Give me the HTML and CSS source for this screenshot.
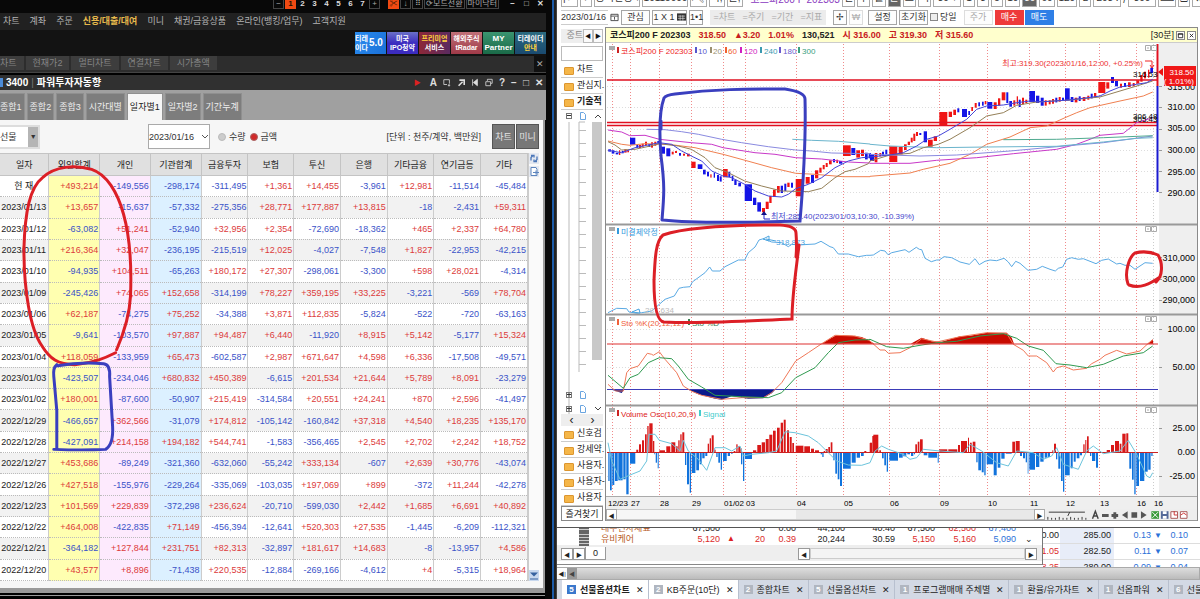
FILE: index.html
```html
<!DOCTYPE html>
<html lang="ko">
<head>
<meta charset="utf-8">
<title>3400 파워투자자동향</title>
<link rel="stylesheet" href="styles.css">
</head>
<body>
<div class="desk">
  <section class="trader">
    <div class="topbar">
      <span class="pager"><b>−</b><b class="on">1</b><b>2</b><b>3</b><b>4</b><b>5</b><b>6</b><b>7</b><b class="boxed">+</b></span>
      <span class="tools"><b class="on">✂</b><b class="boxed">↓</b><b class="boxed">⠿</b><b class="boxed">⟳모드전환</b><b class="boxed">마이닥터</b></span>
      <span class="wins"><b>−</b><b>□</b><b>✕</b></span>
    </div>
    <nav class="menu">
      <a href="#">차트</a><a href="#">계좌</a><a href="#">주문</a><a href="#" class="hot">신용/대출/대여</a><a href="#">미니</a><a href="#">채권/금융상품</a><a href="#">온라인(뱅킹/업무)</a><a href="#">고객지원</a>
    </nav>
    <div class="promos">
      <a href="#" class="p1"><span>티레<br>이다</span><strong>5.0</strong></a>
      <a href="#" class="p2">미국<br>IPO청약</a>
      <a href="#" class="p3"><em>프리미엄</em><br>서비스</a>
      <a href="#" class="p4">해외주식<br>tRadar</a>
      <a href="#" class="p5">MY<br>Partner</a>
      <a href="#" class="p6">티레이더<br><em>안내</em></a>
    </div>
    <div class="quick">
      <a href="#">차트</a><a href="#">현재가2</a><a href="#">멀티차트</a><a href="#">연결차트</a><a href="#">시가총액</a>
      <button class="qx">✕</button>
    </div>
    <header class="wtitle">
      <i class="mark"></i><strong>3400</strong><span class="bar">|</span><strong>파워투자자동향</strong>
      <span class="wicons"><b class="play">▶</b><b>A</b>
        <svg viewBox="0 0 10 10"><path d="M1 1.5h7v5M1 1.500v6h4M6 8.500h3M7.500 7v3"/></svg>
        <svg viewBox="0 0 10 10"><path d="M2 9l5-5M3 2h6v6" stroke-width="2"/></svg>
        <svg viewBox="0 0 10 10"><path d="M2 1v8M8 1v8L3 5z" fill="#ddd"/></svg>
        <svg viewBox="0 0 10 10"><path d="M3 3V1h6v5H7M1 4h6v5H1z"/></svg>
        <b>?</b><b>−</b><b>□</b><b>✕</b></span>
    </header>
    <div class="tabs">
      <button>종합1</button><button>종합2</button><button>종합3</button><button>시간대별</button><button class="sel">일자별1</button><button>일자별2</button><button>기간누계</button>
    </div>
    <div class="sheet">
      <div class="filter">
        <label class="kind"><select aria-label="상품"><option>선물</option></select><i>▼</i></label>
        <label class="date"><select aria-label="일자"><option>2023/01/16</option></select><svg viewBox="0 0 8 8"><path d="M1 2l3 3 3-3" fill="none" stroke="#555"/></svg></label>
        <label><input type="radio" name="unit">수량</label>
        <label><input type="radio" name="unit" checked>금액</label>
        <span class="unit">[단위 : 천주/계약, 백만원]</span>
        <button>차트</button><button>미니</button>
      </div>
      <div class="gridwrap">
        <table class="flow">
          <colgroup><col style="width:49px"><col style="width:51px"><col style="width:51px"><col style="width:51px"><col style="width:47px"><col style="width:46px"><col style="width:47px"><col style="width:47px"><col style="width:47px"><col style="width:47px"><col style="width:47px"></colgroup>
          <thead><tr><th>일자</th><th>외인합계</th><th>개인</th><th>기관합계</th><th>금융투자</th><th>보험</th><th>투신</th><th>은행</th><th>기타금융</th><th>연기금등</th><th>기타</th></tr></thead>
          <tbody id="rows"></tbody>
        </table>
        <div class="side">
          <svg viewBox="0 0 10 10"><path d="M2 7V4l2-2M2 2h3v2M8 3v3L6 8M8 8H5V6" fill="none" stroke="#4a76b8" stroke-width="1.300"/></svg>
          <svg viewBox="0 0 10 10"><path d="M2 1h5l1 2v6H2zM4 6h6M7 4v4" fill="#fff" stroke="#5c84bd"/></svg>
          <svg class="end" viewBox="0 0 10 10"><path d="M1 2h8L5 6zM1 8h8v1H1z" fill="#36629f"/></svg>
        </div>
      </div>
    </div>
    <div class="sill"></div>
    <svg class="marker" viewBox="0 0 556 599" preserveAspectRatio="xMinYMin meet">
      <path class="mr" d="M117 351C124 335 130 318 131 297C132 270 131 240 124 215C118 193 107 175 92 170C75 165 55 167 43 178C30 188 25 212 24 250C24 290 30 330 42 347C50 360 58 366 75 366C95 364 106 359 116 354"/>
      <path class="mb" d="M57 366Q53 369 54 378L57 412V451M58 367Q80 363 104 365Q111 366 110 378L113 428Q114 446 106 451Q84 452 54 451"/>
    </svg>
  </section>

  <section class="charts">
    <div class="cut tb1"><button>|←</button><button>♥</button><button class="w5">동적편성 ▾</button><button class="w5">10115000 ▾</button><button>🔍︎</button><button>미,</button><button>물,</button><span class="vio">코스피200 F 202303</span><button class="push">일</button><button>주</button><button>월</button><button class="dk">분</button><button>초</button><button>틱</button><button class="w3">30 ▾</button><button>1</button><button>3</button><button>5</button><button>10</button><button class="dk">30</button><button>60</button><button>120</button><button>L</button><button class="w3">203 ⁚</button><span>/</span><button class="w3">300</button><button>⌨</button><button>⎙</button><button>✿</button></div>
    <div class="tb2">
      <input class="dt" value="2023/01/16" aria-label="조회일"><svg viewBox="0 0 10 10"><path d="M1 2h8v7H1zM1 4h8M5 5v3" fill="none" stroke="#444"/></svg>
      <button class="w2">관심</button><button class="w4">1 X 1 <svg viewBox="0 0 10 10"><path d="M0 1h10v8H0z" fill="#333"/><path d="M1 4h8M1 6.500h8M3.500 3v6M6.500 3v6" stroke="#fff" stroke-width=".6"/></svg></button><button class="one">1•1</button>
      <span class="off"><button disabled>=차트</button><button disabled>=주기</button><button disabled>=기간</button><button disabled>=지표</button></span>
      <button class="one">✢</button><button class="one dim">₩</button>
      <button class="w2">설정</button><button class="w2">초기화</button><label class="today"><input type="checkbox">당일</label>
      <button class="w2 dim">주가</button><button class="w2 buy">매수</button><button class="w2 sell">매도</button>
    </div>
    <div class="mid">
      <aside class="tree">
        <div class="nub"><span>중트</span><button>◀</button><button>▶</button></div>
        <input class="find" aria-label="검색">
        <a href="#" class="fold">차트</a><a href="#" class="fold">관심지.</a><a href="#" class="fold open">기술적</a>
        <div class="branch">
          <svg viewBox="0 0 42 306" id="twigs"><path d="M18 12V262M18 12h6M8 12V306" stroke="#bbb" fill="none"/></svg>
          <i class="bar"></i>
        </div>
        <div class="lr"><span>‹</span><span>›</span></div>
        <a href="#" class="fold">신호검</a><a href="#" class="fold">강세약.</a><a href="#" class="fold">사용자.</a><a href="#" class="fold">사용자-</a><a href="#" class="fold">사용자</a>
        <button class="fav">즐겨찾기</button>
      </aside>
      <div class="frame">
        <div class="quote"><b>코스피200 F 202303</b><b class="r">318.50</b><b class="r">▲3.20</b><b class="r">1.01%</b><b>130,521</b><b class="r">시 316.00</b><b class="r">고 319.30</b><b class="r">저 315.60</b><span>[30분]</span><button aria-label="창 크기"><svg viewBox="0 0 8 8"><path d="M1.500 2h5v4.500h-5zM1 2.500h6" fill="none" stroke="#222"/></svg></button><button aria-label="닫기"><svg viewBox="0 0 8 8"><path d="M2 2l4 4M6 2L2 6" stroke="#222"/></svg></button></div>
        <svg class="plot" viewBox="606 42 591 466" id="plot">
          <rect x="606" y="42" width="591" height="466" fill="#fff"/>
          <rect x="1159" y="42" width="38" height="466" fill="#efefef"/><rect x="606" y="496" width="591" height="12" fill="#efefef"/>
          <g id="grid"></g>
          <g id="bars"></g>
          <path d="M607 79H1158M607 121.500H1158M607 124.500H1158" stroke="#e01020" stroke-width="1.500"/>
          <path d="M607 388.500H1158" stroke="#3b3bb8"/><path d="M607 451.500H1158" stroke="#c22"/>
          <g id="lines"></g>
          <path d="M607 343H1158" stroke="#dd3030" stroke-width="1.200"/>
          <path d="M1157.500 43V85" stroke="#e01020" stroke-width="2"/><path d="M1157.500 85V191" stroke="#1a1ad0" stroke-width="2"/>
          <path d="M606 223.500H1197M606 313.500H1197M606 404.500H1197" stroke="#999" stroke-width="2"/><path d="M606 495.500H1197" stroke="#aaa"/>
          <g id="heads"></g>
          <g class="t">
            <text x="621" y="53" fill="#e22">코스피200 F 202303</text>
            <text x="698" y="53" fill="#55c">10</text><text x="713" y="53" fill="#998f70">20</text><text x="728" y="53" fill="#f06030">60</text><text x="744" y="53" fill="#d020c0">120</text><text x="764" y="53" fill="#3a9ab0">240</text><text x="783" y="53" fill="#6a5acd">180</text><text x="802" y="53" fill="#3aa080">300</text>
            <text class="end" x="1143" y="65" fill="#e33">최고:319.30(2023/01/16,12:00, +0.25%)</text>
            <text x="771" y="218" fill="#44c">최저:285.40(2023/01/03,10:30, -10.39%)</text>
            <text x="1133" y="76">316.53</text><text x="1133" y="118">306.48</text><text x="1133" y="121">305.43</text>
            <text x="621" y="234" fill="#39d">미결제약정</text><text x="776" y="244" fill="#4aa3df">318,873</text><text x="645" y="312" fill="#bbb">287,634</text>
            <text x="621" y="325" fill="#f0603a">Sto %K(20,12,12)</text><text x="692" y="325" fill="#3a8050">Sto %D</text>
            <text x="621" y="416" fill="#d22">Volume Osc(10,20,9)</text><text x="703" y="416" fill="#4cc">Signal</text>
          </g>
          <path d="M1145 60h7v6M1150 64l2 3 2-3" stroke="#e22" fill="none"/><path d="M770 218h-6v-6" stroke="#22c" fill="none"/><path d="M761 214l3-4 3 4z" fill="#118"/>
          <path d="M763 238l6-3v5zM766 238l10 2M632 311l7-3 1 4z" stroke="#4aa3df" fill="#fff"/>
          <path d="M1158 71l5-4v8z" fill="#e11"/>
          <g class="t big end" id="ticks"></g>
          <rect x="1164" y="65" width="32" height="20" fill="#f01818"/>
          <g class="t end" fill="#fff"><text x="1194" y="74">318.50</text><text x="1194" y="83">( 1.01%)</text></g>
          <g class="t" id="days"></g>
          <path class="mb" d="M662 219C664 195 665 185 661 155C659 130 660 108 664 97Q666 94 675 93C715 88 745 88 785 88Q805 91 805 98C806 135 803 185 800 220Q700 223 663 219M661 120v8"/>
          <path class="mr" d="M799 244C796 270 792 295 792 318C745 320 705 323 664 321Q654 320 654 280C655 255 656 240 663 234C690 225 745 224 780 224Q796 225 796 232Q797 245 796 256"/>
          <path class="mr" d="M1128 283C1124 272 1129 256 1135 252Q1147 249 1158 254C1163 262 1163 275 1156 281M1160 276C1150 283 1140 288 1129 284"/>
        </svg>
        <div class="scroll"><button>◀</button><i></i><button>▶</button>
          <svg viewBox="0 0 160 12"><path d="M4 3h38M3 11V8M7 11V9M11 11V9M15 11V8M19 11V9M23 11V9M27 11V8M31 11V9M35 11V9M39 11V8M43 11V9M26 3l-2 4" stroke="#333" fill="none"/><path d="M50 10l3-8 3 8M51 7h4" stroke="#444" fill="none" stroke-width="1.500"/><path d="M60 5h7v3h-7zM70 5h7v3h-7zM72 3h3v7h-3zM87 2v8l-6-4zM91 3h6v6h-6zM101 2v8l6-4z" fill="#555"/><path d="M112 2h8v8h-8z" fill="#3a9a3a"/><path d="M113 3l6 6M119 3l-6 6" stroke="#fff"/><path d="M122 2h8v8h-8z" fill="#556a99"/><path d="M124 2h4v3h-4zM124 7h4v3h-4z" fill="#fff"/><path d="M132.500 2.500h7v7h-7zM142.500 2.500h7v7h-7z" fill="#fff" stroke="#a55"/><path d="M136 2v4h3M143 6l3-2 3 2" stroke="#c33" fill="none"/></svg></div>
      </div>
    </div>
    <div class="under">
      <div class="stocks">
        <div class="srow cutrow"><i class="qr"></i><a href="#">대우전자재료</a><span>67,500</span><u></u><span>0</span><span>0.00</span><span>44,100</span><span>40.40</span><span>67,500</span><span class="r">62,500</span><span class="b">67,400</span></div>
        <div class="srow"><i class="qr"></i><a href="#">유비케어</a><span class="r">5,120</span><u>▲</u><span class="r">20</span><span class="r">0.39</span><span>20,244</span><span>30.59</span><span class="r">5,150</span><span class="r">5,160</span><span class="b">5,090</span><em>⌄</em></div>
        <div class="sbar"><button>◀</button><button>▶</button><span class="zero">0</span><i class="gap"></i><button>◀</button><i class="track"></i><button>▶</button></div>
      </div>
      <div class="opts">
        <div><span>0.00</span><span class="st">285.00</span><span class="b">0.13</span><u>▼</u><span class="b">0.10</span></div>
        <div><span class="r">1.05</span><span class="st">282.50</span><span class="b">0.11</span><u>▼</u><span class="b">0.07</span></div>
        <div><span class="r">8.25</span><span class="st">280.00</span><span class="b">0.09</span><u>▼</u><span class="b">0.04</span></div>
      </div>
    </div>
    <div class="hbar"><button>◀|</button><button class="g">◀</button><i></i></div>
    <nav class="pages">
      <a href="#" class="cur"><i>5</i>선물옵션차트<b>✕</b></a><a href="#" class="wt"><i>2</i>KB주문(10단)<b>✕</b></a><a href="#"><i>2</i>종합차트<b>✕</b></a><a href="#"><i>5</i>선물옵션차트<b>✕</b></a><a href="#"><i>1</i>프로그램매매 주체별<b>✕</b></a><a href="#"><i>1</i>환율/유가차트<b>✕</b></a><a href="#"><i>1</i>선옵파워<b>✕</b></a><a href="#"><i>6</i>선물옵션</a>
    </nav>
  </section>
</div>
<script src="app.js"></script>
</body>
</html>
```

FILE: styles.css
```css
*{box-sizing:border-box}
body{margin:0;background:#fff;font-family:"Liberation Sans","Noto Sans CJK KR",sans-serif;font-size:9px;line-height:12px;color:#222;overflow:hidden}
a{color:inherit;text-decoration:none}
button,input,select{font:inherit;color:inherit;padding:0;margin:0;border:0;background:none;border-radius:0;appearance:none}
button{white-space:nowrap}
b{font-weight:400}
.desk{display:grid;grid-template-columns:minmax(0,556fr) minmax(0,644fr);min-height:100vh}

.trader{position:relative;background:#080808;padding-right:8px;border-right:2px solid #222;display:flex;flex-direction:column;min-width:0;white-space:nowrap}
.trader::after{content:"";position:absolute;right:0;top:0;bottom:0;width:2px;background:#1c5ba8}
.topbar{height:13px;display:flex;justify-content:flex-end;gap:8px;color:#ddd;overflow:hidden;line-height:8px;font-size:8px}
.topbar span{display:flex;gap:1px;height:9px}
.topbar b{width:11px;text-align:center;font-weight:700}
.topbar .boxed,.pager b:first-child{border:1px solid #444;border-top:0;width:auto;min-width:11px;padding:0 1px;color:#aaa;font-weight:400}
.topbar .on{background:#f04a12;color:#201000}
.topbar .wins{gap:3px}
.menu{height:17px;background:#212121;color:#b5b5b5;display:flex;gap:10px;padding:2px 3px}
.menu .hot{color:#e6b84c;font-weight:700}
.promos{height:26px;background:#131313;display:flex;justify-content:flex-end;gap:1px;padding:2px 0}
.promos a{width:31px;height:22px;color:#fff;font-size:8px;line-height:9px;font-weight:700;text-align:center;padding-top:2px}
.promos em{font-style:normal;color:#ffd23c}
.promos .p1{background:linear-gradient(120deg,#2a8cf0,#1a70d8);display:flex;font-size:7px;gap:1px}
.promos .p1 strong{font-size:10px;line-height:18px}
.promos .p2{background:linear-gradient(#6a70c8,#3c2cc0 50%);font-size:7px}
.promos .p3{background:linear-gradient(90deg,#8d2838,#5a2a60);font-size:7px}
.promos .p4{background:linear-gradient(#c07078,#a03a48);font-size:7px}
.promos .p5{background:linear-gradient(#3a9470,#1a6a48);font-size:8px}
.promos .p6{background:linear-gradient(#2a6a80,#1a4a70);font-size:7px}
.quick{height:17px;background:#2d2d2d;border-bottom:1px solid #444;display:flex;gap:2px;color:#858585}
.quick a{background:#3d3d3d;padding:1px 7px;height:14px}
.quick a:first-child{padding:1px 7px 1px 0}
.quick .qx{margin-left:auto;width:12px;background:#111;color:#aaa}
.wtitle{height:17px;background:#303030;border-top:2px solid #000;color:#fff;display:flex;align-items:center;gap:3px;font-size:10px}
.wtitle .mark{width:3px;height:9px;background:#4b8bd8}
.wtitle .bar{color:#777}
.wicons{margin-left:auto;display:flex;align-items:center;gap:6px;padding-right:3px;color:#ddd}
.wicons b{font-weight:700}
.wicons .play{color:#d22;font-size:7px;margin-right:3px}
.wicons svg{width:8px;height:9px;fill:none;stroke:#ddd}
.tabs{height:30px;background:#a0a0a0;display:flex;gap:2px;padding-top:3px}
.tabs button{background:#7d7d7d;border:1px solid #8f8f8f;border-bottom:0;color:#eee;padding:0 2px}
.tabs button:first-child{padding-left:0;border-left:0}
.tabs .sel{background:#f6f6f6;color:#222}
.sheet{background:#f6f6f6;border-right:2px solid #999;padding-right:3px;margin-right:1px;display:flex;flex-direction:column;padding-bottom:7px}
.filter{height:33px;display:flex;align-items:center;gap:4px;color:#333}
.filter label{display:flex;align-items:center;gap:3px}
.filter .kind{border:2px solid #ddd;border-left:0;background:#fff;height:24px;width:40px;justify-content:space-between;margin-right:104px}
.kind select{width:26px}
.kind i{background:#b5b5b5;font-style:normal;height:20px;line-height:20px;width:10px;font-size:7px;text-align:center}
.filter .date{border:1px solid #aaa;background:#fff;width:62px;height:25px;justify-content:space-between;gap:0;margin-right:4px}
.date svg{width:8px;height:8px}
.filter input{width:8px;height:8px;border-radius:50%;background:#ccc;border:1px solid #bbb}
.filter input:checked{background:#d02a2a;border-color:#a66}
.unit{margin-left:auto;margin-right:7px}
.filter button{background:#777;border:1px solid #555;color:#e5e5e5;width:23px;height:25px;margin-right:-3px}
.filter button:last-child{margin-right:1px}
.gridwrap{display:flex}
.flow{flex:1;border-collapse:collapse;table-layout:fixed;height:428px;min-width:0;background:#fff}
.flow th{background:#e0e0e0;border:1px solid #c4c4c4;border-left:0;height:22px;font-weight:400;padding:0}
.flow td{text-align:right;padding:0 1px 0 0;border-right:1px solid #ccc;border-bottom:1px dotted #bbb;height:21px;line-height:12px}
.flow tr:nth-child(even) td{background:#f2f2f2}
.flow td:first-child{text-align:center;color:#222}
.flow tr td:nth-child(2){background:#ffffb0}
.flow tr td:nth-child(3){background:#fdeafd}
.flow tr td:nth-child(4){background:#dcf0ff}
.up{color:#dc3b3b}.down{color:#3a52c8}
.side{width:12px;display:flex;flex-direction:column;gap:2px;background:#fafafa;border-left:1px solid #ccc}
.side svg{width:10px;height:11px;background:#e4e8f0}
.side .end{margin-top:auto;background:#c8d8ee}
.sill{flex:1;border-top:5px solid #999;background:linear-gradient(#000 0 2px,#999 2px 3px,#000 3px);margin-right:1px}
.marker{position:absolute;left:0;top:0;width:100%;pointer-events:none}
.mr,.mb{fill:none;stroke:#dc1f26;stroke-width:3;stroke-linecap:round}
.mb{stroke:#3a3fbf}

.charts{min-width:0;display:flex;flex-direction:column;background:#fff;border-left:1px solid #444;white-space:nowrap}
.cut{height:7px;overflow:hidden;display:flex;align-items:flex-end;gap:2px;padding:0 4px;color:#333;font-size:10px}
.cut button{height:18px;line-height:16px;border:1px solid #aaa;min-width:12px;flex:none;padding:0 1px}
.cut .w5{width:46px}.cut .w3{width:28px}
.cut .vio{color:#8a3ac0;margin-left:6px}
.cut .push{margin-left:auto}
.cut .dk{background:#666;color:#fff}
.cut span{line-height:14px}
.tb2{height:20px;display:flex;align-items:center;gap:2px;padding:0 4px;color:#333}
.tb2 svg{width:9px;height:10px;flex:none}
.tb2 button{height:15px;border:1px solid #a5a5a5;background:#fdfdfd}
.tb2 .dt{width:47px;height:15px;flex:none;border:1px solid #ccc;border-width:1px 0}
.tb2 .w2{width:29px;flex:none}
.tb2 .w4{width:35px;display:flex;align-items:center;justify-content:center;gap:2px}
.tb2 .one{width:14px}
.off{display:flex;background:#ececec;margin:0 5px}
.off button{width:29px;border:0;background:none;color:#aaa}
.tb2 .dim{color:#aaa;border-color:#ddd}
.tb2 .one.dim{margin-right:3px}
.today{display:flex;align-items:center;gap:2px;margin-right:5px}
.today input{width:8px;height:8px;border:1px solid #888;background:#eee}
.tb2 .buy{background:#ee3a3a;border-color:#ee3a3a;color:#fff;margin-right:-1px}
.tb2 .sell{background:#2f7fe6;border-color:#2f7fe6;color:#fff}
.mid{display:flex;gap:2px;padding:0 2px 6px 4px;background:#fff;border-bottom:1px solid #555}
.tree{width:42px;flex:none;display:flex;flex-direction:column;background:#fff}
.nub{display:flex;height:14px;background:#eee;margin-top:2px;color:#888;justify-content:flex-end}
.nub button{width:10px;border:1px solid #bbb;font-size:6px;color:#111;background:#fafafa}
.find{border:1px solid #bbb;width:100%;height:15px;margin:3px 0 1px}
.fold{height:16px;line-height:14px;padding-left:16px;border-bottom:1px solid #ccc;position:relative;flex:none}
.fold::before{content:"";position:absolute;left:3px;top:5px;width:8px;height:6px;background:#f5b648;border:1px solid #dc9630;border-radius:1px}
.open{font-weight:700}
.branch{display:flex;flex:1 1 0;min-height:0;overflow:hidden;position:relative}
.branch svg{width:42px;height:306px;flex:none}
.branch .bar{position:absolute;right:1px;top:12px;width:10px;height:238px;background:#c8c8c8}
.lr{display:flex;height:12px;background:#eee;justify-content:space-around;font-size:12px}
.fav{border:1px solid #888;height:15px;line-height:12px;text-align:center}
.frame{flex:1;min-width:0;border:1px solid #8a8a8a;border-width:1px 1px 0}
.quote{height:15px;background:#ffffcd;display:flex;align-items:center;gap:8px;padding:0 1px 0 4px;border-bottom:1px solid #ccc}
.quote b{font-weight:700}
.quote .r{color:#c8201e}
.quote span{margin-left:auto}
.quote button{width:9px;height:9px;border:1px solid #888;background:#fff;margin-left:-6px}
.quote svg{display:block;width:7px;height:7px}
.plot{display:block;width:100%;height:auto}
.t{font-size:8px}
.big{font-size:9px}
.end{text-anchor:end}
.scroll{height:12px;display:flex;background:#eee;border-bottom:1px solid #999}
.scroll button{width:11px;border:1px solid #aaa;background:#fff;font-size:6px}
.scroll i{flex:1;background:linear-gradient(90deg,#f6f6f6 43%,#e8e8e8 43%);border:1px solid #ccc;border-width:1px 0}
.scroll svg{width:152px;height:12px}
.under{display:flex;height:39px;overflow:hidden}
.stocks{width:486px;flex:none;border-right:1px solid #777;border-bottom:1px solid #888;height:37px}
.srow{display:grid;grid-template-columns:40px 78px 45px 15px 30px 31px 49px 50px 40px 41px 40px 1fr;height:14px;line-height:14px;text-align:right;border-bottom:1px solid #eee}
.srow a{text-align:left;padding-left:4px;color:#b85c28}
.srow u,.opts u{text-decoration:none;color:#d22;font-size:8px;text-align:right}
.srow em{font-style:normal;text-align:center}
.srow .qr{width:10px;background:repeating-linear-gradient(0deg,#666 0 2px,#ccc 2px 3px);justify-self:end;margin-right:8px}
.cutrow{height:4px;line-height:0;overflow:hidden;border:0}
.r{color:#dc2b2b}.b{color:#2b70d8}
.sbar{height:15px;display:flex;padding-left:4px;background:#eee;align-items:center}
.sbar button{width:12px;height:12px;background:#fff;border:1px solid #999;font-size:6px}
.zero{padding:0 7px;background:#fff;border:1px solid #999;border-top:0}
.gap{width:192px}
.track{flex:1;height:11px;border:1px solid #ccc;background:#f4f4f4}
.sbar button:last-child{margin-right:5px}
.opts{flex:1;min-width:0}
.opts div{display:grid;grid-template-columns:17px 54px 37px 11px 26px;height:16px;line-height:15px;text-align:right;border-bottom:1px solid #ddd}
.opts span:first-child{padding-right:1px;display:flex;justify-content:flex-end;overflow:hidden}
.opts .st{background:#e8edf8;padding-right:3px}
.opts u{color:#2b70d8}
.hbar{height:13px;display:flex;background:#cfcfcf;border:1px solid #aaa;border-left:0}
.hbar button{width:10px;background:#fff;font-size:6px}
.hbar .g{background:#999;color:#444}
.hbar i{flex:1;background:linear-gradient(#ddd,#bbb)}
.pages{flex:1;min-height:19px;background:#d3d9e4;display:flex;padding-left:5px;overflow:hidden;align-items:stretch}
.pages a{display:flex;align-items:center;gap:4px;padding:0 4px 0 5px;border-right:1px solid #b8c0cf;flex:none}
.pages i{font-style:normal;width:9px;height:9px;line-height:9px;background:#b0b6c0;color:#fff;text-align:center;font-weight:700;font-size:8px}
.pages b{margin-left:2px}
.pages .cur,.pages .wt{background:#fff}
.pages .cur{font-weight:700}
.pages .cur i{background:#3a78cc}
```

FILE: app.js
```js
const table = `현 재|+493,214 -149,556 -298,174 -311,495 +1,361 +14,455 -3,961 +12,981 -11,514 -45,484
2023/01/13|+13,657 -15,637 -57,332 -275,356 +28,771 +177,887 +13,815 -18 -2,431 +59,311
2023/01/12|-63,082 +51,241 -52,940 +32,956 +2,354 -72,690 -18,362 +465 +2,337 +64,780
2023/01/11|+216,364 +32,047 -236,195 -215,519 +12,025 -4,027 -7,548 +1,827 -22,953 -42,215
2023/01/10|-94,935 +104,511 -65,263 +180,172 +27,307 -298,061 -3,300 +598 +28,021 -4,314
2023/01/09|-245,426 +74,065 +152,658 -314,199 +78,227 +359,195 +33,225 -3,221 -569 +78,704
2023/01/06|+62,187 -74,275 +75,252 -34,388 +3,871 +112,835 -5,824 -522 -720 -63,163
2023/01/05|-9,641 -103,570 +97,887 +94,487 +6,440 -11,920 +8,915 +5,142 -5,177 +15,324
2023/01/04|+118,059 -133,959 +65,473 -602,587 +2,987 +671,647 +4,598 +6,336 -17,508 -49,571
2023/01/03|-423,507 -234,046 +680,832 +450,389 -6,615 +201,534 +21,644 +5,789 +8,091 -23,279
2023/01/02|+180,001 -87,600 -50,907 +215,419 -314,584 +20,551 +24,241 +870 +2,596 -41,497
2022/12/29|-466,657 +362,566 -31,079 +174,812 -105,142 -160,842 +37,318 +4,540 +18,235 +135,170
2022/12/28|-427,091 +214,158 +194,182 +544,741 -1,583 -356,465 +2,545 +2,702 +2,242 +18,752
2022/12/27|+453,686 -89,249 -321,360 -632,060 -55,242 +333,134 -607 +2,639 +30,776 -43,074
2022/12/26|+427,518 -155,976 -229,264 -335,069 -103,035 +197,069 +899 -372 +11,244 -42,278
2022/12/23|+101,569 +229,839 -372,298 +236,624 -20,710 -599,030 +2,442 +1,685 +6,691 +40,892
2022/12/22|+464,008 -422,835 +71,149 -456,394 -12,641 +520,303 +27,535 -1,445 -6,209 -112,321
2022/12/21|-364,182 +127,844 +231,751 +82,313 -32,897 +181,617 +14,683 -8 -13,957 +4,586
2022/12/20|+43,577 +8,896 -71,438 +220,535 -12,884 -269,166 -4,612 +4 -5,315 +18,964`;
document.getElementById('rows').innerHTML = table.split('\n').map(line => {
  const [day, nums] = line.split('|');
  return `<tr><td>${day}</td>` + nums.split(' ').map(n => `<td class="${n[0] === '+' ? 'up' : 'down'}">${n}</td>`).join('') + '</tr>';
}).join('');

const el = id => document.getElementById(id);

// Chart data is stored in thirds of a unit; A and B are the left and right halves.
const A = 555, B = 870;
const fx = (v, o) => (v / 3 + o).toFixed(1);
const pts = (half, top, s) => s.trim().split(' ').map(p => { const [x, y] = p.split(','); return fx(+x, half) + ',' + fx(+y, top); }).join(' ');
const line = (top, color, a, b) => `<polyline fill="none" stroke="${color}" points="${a ? pts(A, top, a) : ''} ${b ? pts(B, top, b) : ''}"/>`;
const poly = (half, top, color, s) => `<polygon fill="${color}" points="${pts(half, top, s)}"/>`;

const days = [[612,'12/23',608],[630,'27'],[659,'28'],[691,'29'],[723,'01/02'],[745,'03'],[796,'04'],[843,'05'],[889,'06'],[939,'09'],[987,'10'],[1029,'11'],[1065,'12'],[1099,'13'],[1136,'16'],[1153,'16']];
let g = '';
for (const y of [85,106,128,149,170,191,256,278,299,328,366,427,475]) g += `<path d="M607 ${y}.5H1158" stroke="#ddd" stroke-dasharray="1 2"/><path d="M1159 ${y}.5h3" stroke="#999"/>`;
days.forEach(([x], i) => { g += `<path d="M${x}.5 43V495" stroke="${i === 15 ? '#ccc' : '#f08a8a'}" stroke-dasharray="1 2"/>`; });
el('grid').innerHTML = g;
el('days').innerHTML = days.map(([x, t, at]) => `<text x="${at || x + 1}" y="505">${t}</text>`).join('');
el('ticks').innerHTML = [[89,'315.00'],[109,'310.00'],[130,'305.00'],[152,'300.00'],[174,'295.00'],[195,'290.00'],[260,'310,000'],[281,'300,000'],[302,'290,000'],[331,'100.00'],[369,'50.00'],[430,'25.00'],[454,'0.00'],[478,'-25.00']].map(([y, t]) => `<text x="1195" y="${y}">${t}</text>`).join('');

let h = '';
for (const y of [45,226,316,407]) h += `<rect x="609" y="${y}" width="6" height="4" fill="#aaa"/><path d="M1145.500 ${y - .5}h5v5h-5zM1151.500 ${y - .5}h5v5h-5zM1147 ${y + 2}h2" stroke="#aaa" fill="none"/>`;
for (const [x, y, c] of [[617,46,'#c22'],[695,46,'#55c'],[710,46,'#998f70'],[725,46,'#f06030'],[740,46,'#d020c0'],[760,46,'#3a9ab0'],[779,46,'#6a5acd'],[798,46,'#3aa080'],[617,227,'#39d'],[617,318,'#f0603a'],[688,318,'#3a8050'],[617,409,'#c22'],[699,409,'#4cc']]) h += `<rect x="${x}" y="${y}" width="2" height="6" fill="${c}"/>`;
el('heads').innerHTML = h;

const candlesA = `160,445,168,452b 170,448,178,458b 182,455,190,460b 192,448,196,462r 200,450,206,457b 208,445,215,455r 217,448,222,454r 225,410,241,431b 244,432,250,440b 252,432,258,441r 260,428,266,437r 270,422,276,432r 280,430,286,438b 288,424,294,440r 298,422,304,434r 307,420,312,428b 315,437,330,458b 334,442,346,466b 350,452,356,460r 360,450,366,456r 372,456,378,464b 384,458,390,464r 396,458,404,466r 409,482,422,501r 428,490,442,504b 444,506,452,520b 456,512,462,526b 466,520,470,530r 476,515,480,530b 486,522,492,540b 494,526,500,542b 504,504,518,529r 520,512,526,528b 530,524,535,540b 538,536,545,552b 550,545,558,556b 569,550,591,600b 594,590,604,612b 607,604,618,632b 621,621,630,634r 632,602,641,624r 643,585,650,606r 654,566,662,588r 666,555,674,575r 677,554,684,576b 688,548,694,570b 697,545,704,558r 708,545,714,560b 722,534,742,586r 752,528,764,548r 768,522,777,546b 780,508,790,532r 793,500,800,515r 803,492,809,505r 812,486,818,498r 822,478,830,490r 834,474,840,484b 844,476,849,486r 852,480,862,488b 864,433,887,465r 889,441,901,462b 904,448,915,470r 918,446,927,465r 930,455,938,475b 941,456,948,472b 950,462,958,480r`;
const candlesB = `0,460,12,480b 14,456,22,484r 28,456,34,466r 36,452,42,464b 46,446,52,460b 58,436,82,483r 86,438,98,460r 102,430,110,447r 113,422,120,432r 122,410,128,424r 130,398,136,420r 138,393,144,405r 148,396,154,402b 161,391,171,424b 174,416,188,437r 191,406,201,420r 208,333,232,373r 236,332,246,348r 250,326,258,342r 262,322,268,334b 276,324,291,348b 295,330,300,342b 304,318,309,330r 314,306,320,320r 325,304,330,316b 336,302,341,314b 344,300,349,310r 352,303,367,323b 371,304,380,324r 384,292,391,314r 395,274,406,298r 409,274,415,306b 418,300,426,317b 430,298,436,314r 440,286,444,310r 446,296,452,318b 456,290,462,310r 466,296,472,306r 478,270,495,303b 498,284,508,306b 512,290,521,314b 524,298,530,314r 536,298,542,310r 546,294,552,308r 556,290,562,304b 566,288,572,302r 576,290,582,300b 585,262,599,299b 602,288,610,303b 614,290,622,304r 626,286,632,300b 638,288,646,300r 652,284,658,296r 662,278,668,292b 672,276,679,290r 685,243,706,276r 709,244,718,263r 723,228,732,246b 735,240,744,256b 750,248,756,260r 762,246,768,258b 774,244,782,258r 788,246,794,256r 799,238,808,248r 811,222,818,242r 822,212,828,232r 834,206,838,230r 841,200,849,216b`;
const candles = (half, s) => s.split(' ').map(c => {
  const [x1, y1, x2, y2] = c.slice(0, -1).split(',').map(Number);
  return `<rect x="${fx(x1, half)}" y="${fx(y1, 0)}" width="${((x2 - x1) / 3).toFixed(1)}" height="${((y2 - y1) / 3).toFixed(1)}" fill="${c.endsWith('r') ? '#f01414' : '#1414e6'}"/>`;
}).join('');

const volA = `160,164,240 165,170,268 172,178,252 180,188,240 190,203,238 205,212,235 214,221,280 225,241,188 298,300,160 302,306,185 308,311,202 390,394,192 396,402,250 404,408,275 410,421,216 424,432,208 434,440,190 442,449,172 451,457,165 484,488,168 490,495,185 497,501,206 504,515,180 518,525,165 528,533,158 558,562,190 564,568,240 570,591,174 797,801,160 802,806,168 835,839,178 841,846,218 848,853,235 855,861,255 864,887,203 890,902,185 905,915,170 918,926,165 244,250,146 252,258,130 261,267,118 270,275,100 277,281,75 283,293,67 294,298,120 313,330,148 334,346,136 349,361,124 363,368,136 370,374,118 376,380,100 382,388,94 458,462,128 464,468,112 470,476,103 478,482,146 536,541,150 544,548,130 550,555,136 556,560,142 594,604,148 607,618,132 620,630,124 632,641,114 643,652,101 654,662,89 666,674,80 677,684,65 686,692,56 696,702,88 704,710,108 712,717,126 722,745,134 748,765,136 768,777,143 780,792,148 806,810,150 812,818,144 820,825,138 827,832,124 928,934,150 944,950,126 952,958,105`;
const volB = `0,6,125 10,25,101 28,33,148 136,141,130 143,148,122 150,158,115 208,232,145 235,262,145 264,270,132 273,291,120 294,297,110 300,305,125 308,316,122 427,435,122 437,449,120 547,550,148 552,558,128 640,644,130 646,649,117 651,656,106 710,720,147 723,732,132 735,747,120 749,754,128 757,767,98 769,775,97 36,41,172 43,48,193 50,54,212 58,84,179 87,98,170 100,109,166 112,120,160 123,130,165 132,135,160 161,172,163 175,201,170 203,206,185 319,323,184 325,333,208 335,341,214 343,347,223 350,369,190 371,380,223 383,391,200 394,404,173 407,425,158 450,456,165 459,465,172 467,471,184 473,475,218 478,495,206 498,508,198 511,521,182 524,532,170 534,540,168 558,562,175 565,571,203 573,578,240 579,583,272 585,599,223 602,608,202 611,617,182 620,628,172 630,636,163 660,664,165 666,676,180 678,684,200 685,706,156 778,784,203 786,791,236 793,797,280 799,807,255 810,823,240 825,833,212 835,842,206 844,848,165`;
const vols = (half, s) => s.split(' ').map(c => {
  const [x1, x2, y] = c.split(',').map(Number);
  const up = y < 153;
  return `<rect x="${fx(x1, half)}" y="${fx(up ? y : 153, 400)}" width="${((x2 - x1) / 3).toFixed(1)}" height="${(Math.abs(153 - y) / 3).toFixed(1)}" fill="${up ? '#d81818' : '#1173dc'}"/>`;
}).join('');
el('bars').innerHTML = candles(A, candlesA) + candles(B, candlesB) + vols(A, volA) + vols(B, volB)
  + poly(A, 215, '#c80a00', '800,383 825,368 845,357 890,359 920,363 940,372 958,383')
  + poly(B, 215, '#c80a00', '122,383 155,365 185,376 215,377 270,361 300,359 350,350 410,350 425,365 432,383')
  + poly(B, 215, '#c80a00', '833,383 848,370 850,383')
  + poly(A, 215, '#0a1a8c', '170,521 200,531 208,520')
  + poly(A, 215, '#0a1a8c', '400,521 430,535 480,548 500,551 530,541 580,548 625,547 650,532 662,520');

el('lines').innerHTML =
  line(0, '#c838c8', '159,387 200,393 224,404 270,403 313,415 409,425 470,430 504,440 600,455 660,460 722,470 800,474 880,483 945,486', '0,487 120,487 200,478 320,470 430,458 560,445 620,430 660,415 690,403 760,397 800,365 848,350')
+ line(0, '#f08050', '159,420 200,430 225,433 270,428 340,430 420,440 504,460 570,478 650,500 722,517 780,520 864,527 945,527', '0,526 120,516 160,505 240,487 300,460 350,430 420,408 480,380 530,375 585,350 620,335 660,320 750,300 820,285 848,273')
+ line(0, '#8a8ae0', '275,385 330,386 380,392 430,400 500,415 560,425 640,437 722,447 770,450 830,456 945,458', '0,460 60,462 150,465 260,462 420,450 585,435 700,425 848,405')
+ line(0, '#6ab4cc', '712,415 770,418 850,421 945,429', '0,430 60,435 200,440 350,438 560,436 700,423 800,412 848,410')
+ line(0, '#50aa90', '', '400,416 560,415 700,410 848,404')
+ line(0, '#948058', '159,422 180,432 200,447 240,445 300,432 313,428 370,435 409,445 450,470 480,500 520,515 569,540 620,555 680,570 760,572 800,562 840,530 870,512 900,505 940,488', '0,480 60,462 120,457 160,440 205,430 240,415 300,380 350,345 400,335 440,313 500,303 600,297 690,288 750,270 800,255 848,240')
+ line(0, '#4444d8', '159,448 200,455 240,440 313,425 350,430 380,450 409,465 440,480 470,510 504,525 530,530 569,550 600,570 640,585 680,588 700,580 722,563 760,550 800,530 840,500 880,480 920,470', '0,468 60,462 100,455 140,435 170,415 205,405 240,385 290,355 320,325 350,315 400,312 440,305 480,300 520,302 585,298 640,292 690,285 720,270 750,258 800,250 830,245 848,235')
+ line(215, '#5aaae4', '159,290 185,277 215,278 222,288 245,292 260,290 290,285 313,265 330,250 358,240 372,217 385,214 405,212 412,198 450,170 464,153 472,165 495,165 510,152 550,132 569,132 580,110 600,93 612,72 625,68 650,78 680,80 700,92 710,85 730,87 780,84 798,76 825,92 835,95 850,114 880,114 910,122 935,118', '0,118 10,117 32,103 45,105 54,116 65,110 105,101 117,109 139,94 148,100 155,101 165,127 184,137 200,132 208,132 222,122 245,125 270,138 298,145 315,128 328,146 345,136 360,132 380,134 402,127 415,138 425,152 437,136 450,142 474,163 500,160 517,151 540,160 556,165 565,157 578,153 590,130 605,125 625,130 640,128 660,136 678,143 695,133 715,129 740,144 750,142 765,148 780,148 795,160 825,140 848,142')
+ line(215, '#f07858', '159,505 170,515 182,525 205,525 215,470 225,458 250,450 277,412 290,415 295,418 313,407 330,430 365,470 385,510 409,525 440,538 500,550 560,545 625,545 650,530 680,500 722,435 760,410 800,383 840,358 900,360 940,372', '0,375 30,402 45,402 55,412 90,410 120,395 155,368 200,378 270,362 350,350 410,352 430,385 460,403 475,420 500,420 530,440 550,468 560,455 580,450 610,462 650,457 665,443 690,430 705,418 740,403 770,414 810,405 835,382 848,372')
+ line(215, '#2f9a50', '159,478 205,517 225,485 250,475 280,440 313,425 350,428 370,450 400,490 440,513 480,538 560,542 640,545 680,530 722,485 780,455 820,410 850,380 900,372 940,371', '0,370 50,392 100,397 150,388 200,380 260,376 330,360 400,353 440,367 475,390 520,403 558,443 600,447 650,455 700,445 760,420 820,410 848,390')
+ line(400, '#6cc4dc', '159,125 170,180 195,235 225,222 255,210 275,180 282,100 300,100 313,118 350,128 375,150 385,118 400,150 430,175 455,208 480,140 510,140 530,150 555,135 565,165 590,160 640,155 665,150 690,92 720,95 760,105 790,125 820,155 845,180 880,192 920,193', '0,185 15,150 35,135 55,145 100,160 120,175 140,170 160,145 210,150 280,155 300,130 335,150 380,185 415,195 440,150 490,155 520,175 545,165 560,140 580,190 625,205 650,150 670,135 700,158 750,150 775,118 800,160 830,225 840,230 848,215');

let tw = '';
for (let y = 20; y <= 258; y += 13) tw += `<path d="M18 ${y}.5h7" stroke="#bbb"/>`;
for (const y of [5, 284, 298]) tw += `<rect x="5.500" y="${y - 2}.5" width="5" height="5" fill="#fff" stroke="#777"/><path d="M6 ${y}.5h4${y > 5 ? 'M8 ' + (y - 1) + 'v4' : ''}" stroke="#333"/><path d="M19.500 ${y - 3}.5h3l2 2v5h-5z" fill="#fff" stroke="#6aa5e0"/>`;
tw += '<path d="M34 8l3-3 3 3M34 297l3 3 3-3" fill="none" stroke="#444"/>';
el('twigs').insertAdjacentHTML('beforeend', tw);
```
